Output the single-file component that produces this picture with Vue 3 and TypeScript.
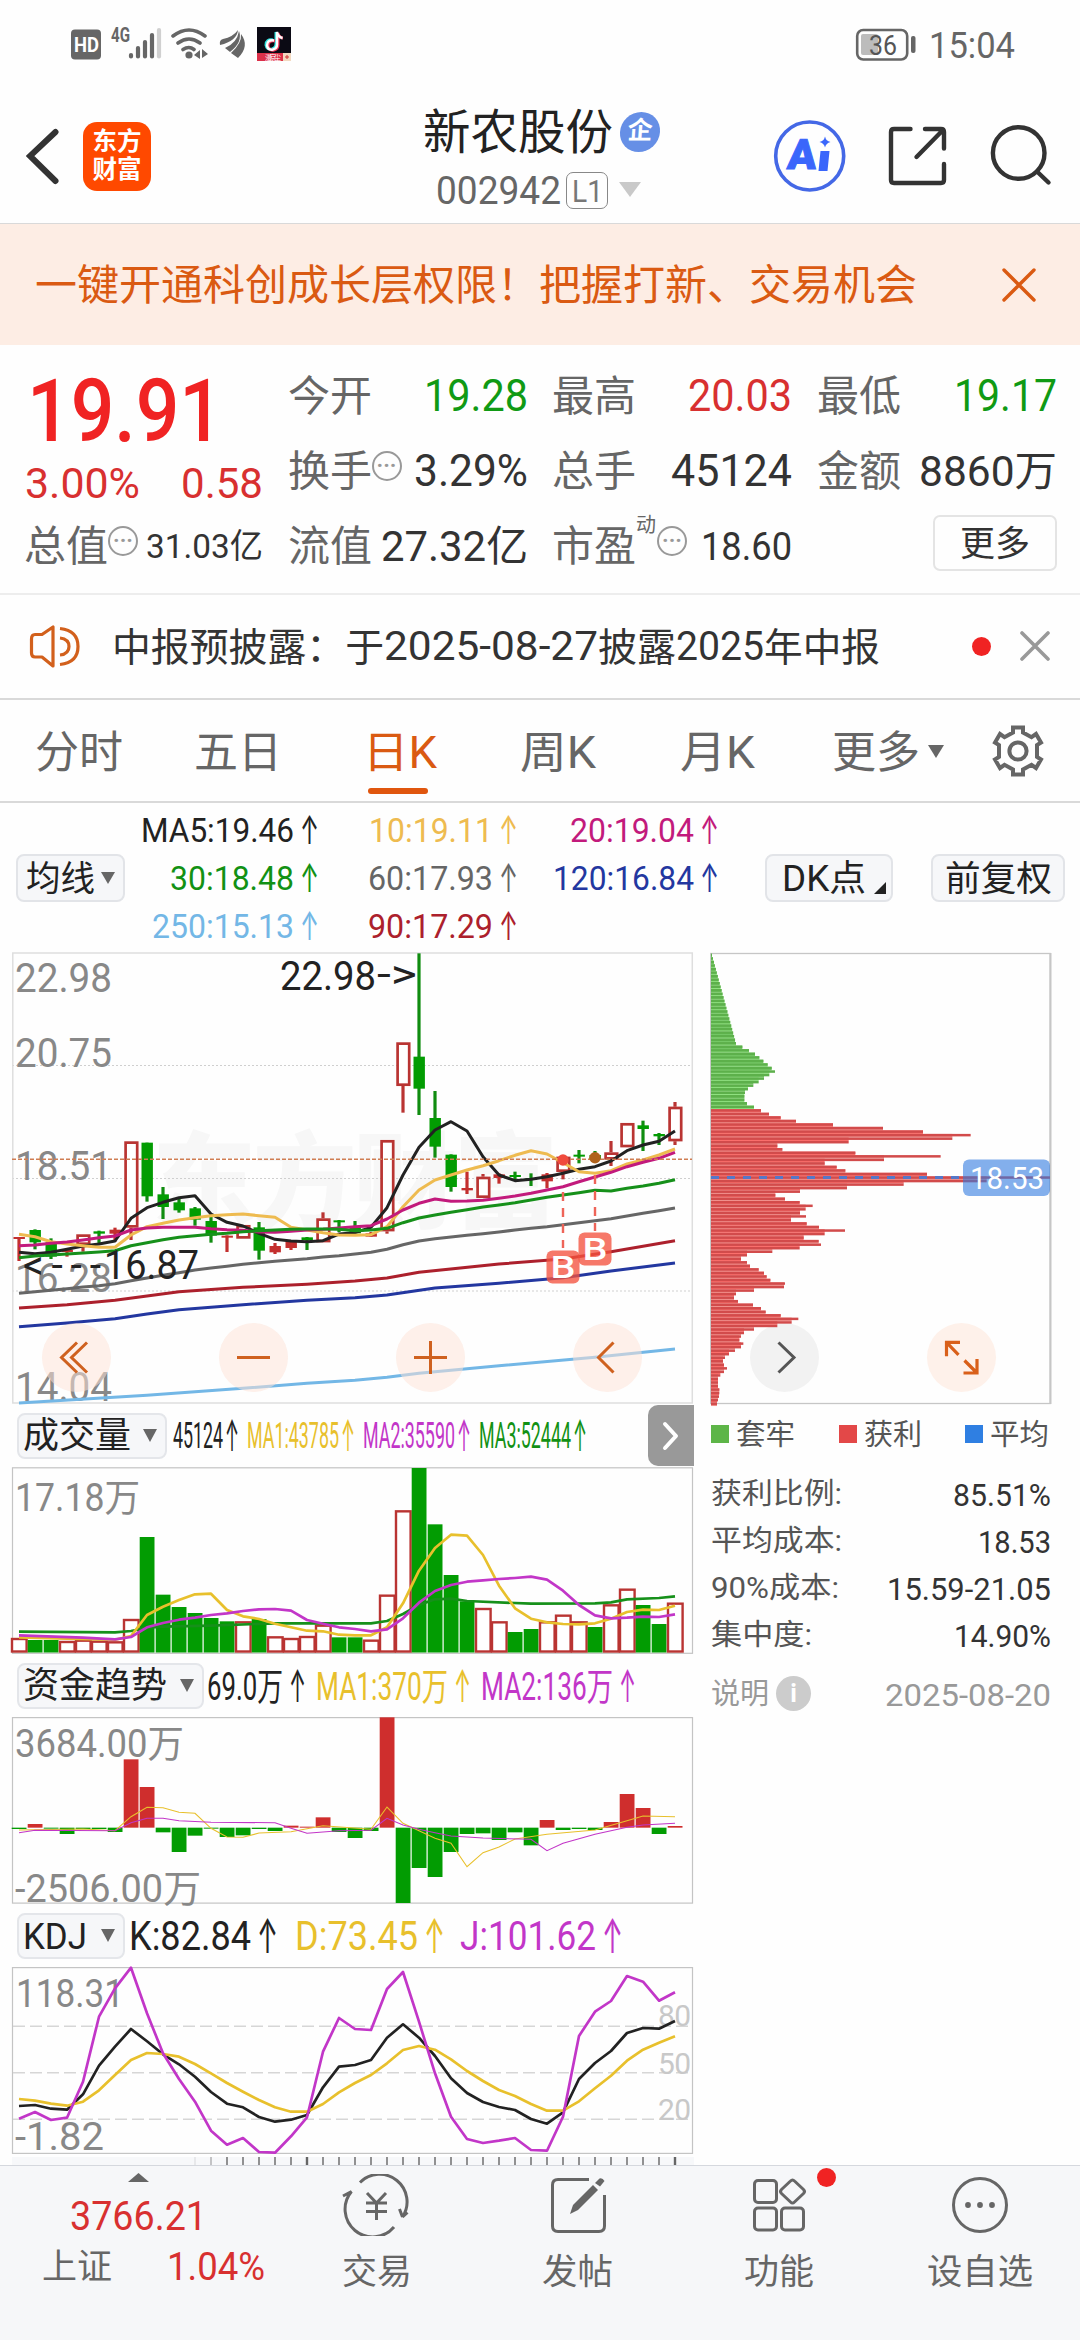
<script setup lang="ts">
import { defineComponent, h } from 'vue'

// One line of text squeezed or stretched to an exact advance width, centred vertically in its box.
// `aw` is the width of a trailing up arrow (0 for none), `ag` the gap before it.
const Fit = defineComponent({
  props: {
    t: { type: String, required: true },
    w: { type: Number, required: true },
    s: { type: Number, default: 42 },
    c: { type: String, default: '#333' },
    weight: { type: Number, default: 400 },
    aw: { type: Number, default: 0 },
    ag: { type: Number, default: 7 },
  },
  setup(p) {
    return () => {
      const box = Math.round(p.s * 1.2)
      const base = box / 2 + p.s * 0.36
      const kids = [
        h('text', {
          x: 0, y: base, 'font-size': p.s, fill: p.c, 'font-weight': p.weight,
          textLength: p.aw ? p.w - p.aw - p.ag : p.w, lengthAdjust: 'spacingAndGlyphs',
        }, p.t),
      ]
      if (p.aw) {
        kids.push(h('text', {
          x: p.w - p.aw - 1, y: base + p.s * 0.07, 'font-size': p.s * 1.2, fill: p.c, textLength: p.aw + 3,
          lengthAdjust: 'spacingAndGlyphs', 'font-family': 'Inter, sans-serif',
        }, '↑'))
      }
      return h('svg', { width: p.w, height: box, style: 'display:block;flex:none;overflow:visible' }, kids)
    }
  },
})

type Pt = [number, number]
const RED = '#b93432'
const GREEN = '#029c02'
const X = (i: number) => 19 + 16 * i
const line = (pts: Pt[], top: number) =>
  pts.map(([i, y]) => `${X(i)},${(top + y / 3).toFixed(1)}`).join(' ')
const all = (ys: number[]): Pt[] => ys.map((y, i) => [i, y] as Pt)

// kind, high, body top, body bottom, low
const rawCandles: [string, number, number, number, number][] = [
  ['r', 891, 891, 896, 963], ['g', 868, 870, 907, 928], ['g', 895, 907, 950, 957], ['r', 925, 929, 936, 950],
  ['h', 883, 883, 915, 935], ['g', 872, 874, 881, 910], ['r', 863, 869, 881, 905], ['h', 604, 604, 863, 900],
  ['g', 608, 608, 769, 785], ['g', 741, 763, 801, 837], ['g', 773, 787, 811, 818], ['g', 801, 805, 839, 857],
  ['g', 830, 843, 887, 908], ['r', 886, 887, 893, 936], ['h', 855, 855, 896, 896], ['g', 846, 862, 932, 959],
  ['r', 909, 918, 937, 942], ['r', 900, 905, 924, 930], ['g', 891, 892, 900, 930], ['h', 817, 835, 907, 907],
  ['g', 840, 841, 847, 876], ['g', 843, 862, 880, 880], ['r', 876, 880, 890, 890], ['h', 600, 600, 874, 881],
  ['h', 307, 307, 438, 518], ['g', 40, 350, 446, 525], ['g', 453, 534, 620, 653], ['g', 643, 644, 741, 755],
  ['r', 695, 744, 751, 762], ['h', 702, 710, 774, 774], ['r', 700, 703, 714, 731], ['g', 695, 705, 710, 722],
  ['g', 700, 714, 717, 738], ['r', 699, 703, 724, 745], ['h', 650, 650, 696, 718], ['g', 630, 644, 648, 670],
  ['g', 633, 645, 660, 668], ['h', 603, 637, 659, 678], ['h', 549, 549, 622, 622], ['g', 542, 556, 567, 633],
  ['g', 579, 582, 589, 615], ['h', 486, 500, 604, 615],
]
const candles = rawCandles.map(([k, hi, t, b, lo], i) => ({
  k, x: X(i), hi: 940 + hi / 3, t: 940 + t / 3, b: 940 + b / 3, lo: 940 + lo / 3,
}))

const priceLines = [
  { c: '#73b7e6', p: [[0, 1389], [8, 1366], [14, 1345], [18, 1330], [21, 1321], [23, 1312], [25, 1300], [30, 1277], [36, 1252], [41, 1227]] as Pt[] },
  { c: '#2337a0', p: [[0, 1160], [3, 1149], [6, 1136], [8, 1122], [10, 1109], [14, 1094], [18, 1081], [21, 1073], [23, 1065], [26, 1044], [30, 1030], [34, 1013], [37, 993], [41, 969]] as Pt[] },
  { c: '#ac202c', p: [[0, 1104], [3, 1094], [6, 1081], [8, 1068], [10, 1055], [14, 1042], [18, 1033], [21, 1023], [23, 1014], [25, 997], [30, 972], [34, 957], [37, 935], [41, 902]] as Pt[] },
  { c: '#666', p: all([1060, 1055, 1051, 1046, 1041, 1037, 1031, 1022, 1014, 1006, 998, 990, 984, 979, 973, 968, 964, 960, 956, 951, 947, 942, 937, 928, 914, 903, 896, 891, 886, 881, 876, 870, 865, 860, 854, 848, 842, 836, 828, 820, 812, 804]) },
  { c: '#222', p: all([937, 941, 937, 928, 918, 912, 903, 835, 803, 787, 773, 767, 822, 847, 858, 880, 898, 903, 905, 902, 882, 878, 862, 803, 705, 622, 570, 545, 573, 650, 705, 722, 718, 710, 700, 688, 680, 663, 632, 615, 604, 573]) },
  { c: '#eebb50', p: all([883, 890, 905, 912, 917, 922, 922, 885, 860, 850, 840, 833, 827, 824, 822, 827, 832, 862, 870, 878, 885, 886, 884, 860, 800, 750, 720, 705, 690, 677, 662, 646, 632, 642, 668, 695, 700, 692, 672, 660, 645, 627]) },
  { c: '#c21a7c', p: all([917, 915, 910, 906, 900, 893, 888, 870, 864, 862, 862, 862, 866, 869, 871, 876, 877, 874, 870, 868, 864, 860, 857, 837, 810, 790, 777, 784, 783, 781, 775, 768, 760, 750, 740, 725, 711, 697, 680, 667, 655, 637]) },
  { c: '#16901a', p: all([953, 948, 945, 942, 939, 936, 932, 917, 908, 899, 892, 887, 883, 880, 875, 872, 870, 868, 867, 867, 868, 872, 870, 865, 848, 834, 825, 817, 809, 801, 795, 788, 780, 772, 765, 758, 751, 753, 745, 738, 730, 719]) },
]
const priceLabels: [string, number][] = [['22.98', 992], ['20.75', 1067], ['18.51', 1180], ['16.28', 1292], ['14.04', 1401]]

const volRaw = 'r717 g720 g720 r726 r722 r725 r727 r660 g411 g584 g621 g639 g654 g664 r667 g657 r712 r717 r711 r677 g712 g712 r722 r587 r334 g204 g373 g525 g604 r627 r667 g696 g687 r667 r647 r667 g681 r616 r569 g615 g672 r611'
const vol = volRaw.split(' ').map((v, i) => ({ k: v[0], x: X(i), y: 1400 + Number(v.slice(1)) / 3 }))
const volLines = [
  { c: '#16901a', p: [[0, 695], [6, 697], [7, 693], [8, 683], [9, 680], [12, 677], [16, 670], [22, 670], [23, 663], [24, 642], [25, 615], [26, 598], [27, 596], [28, 603], [32, 611], [36, 610], [37, 607], [38, 598], [40, 594], [41, 589]] as Pt[] },
  { c: '#e8c02c', p: [[0, 712], [3, 716], [6, 719], [7, 708], [8, 645], [9, 620], [10, 600], [11, 583], [12, 581], [13, 630], [14, 649], [15, 657], [16, 671], [17, 682], [18, 692], [19, 694], [20, 704], [21, 706], [22, 706], [23, 682], [24, 610], [25, 512], [26, 444], [27, 404], [28, 407], [29, 465], [30, 557], [31, 625], [32, 656], [33, 667], [34, 672], [35, 673], [36, 670], [37, 656], [38, 636], [39, 629], [40, 630], [41, 617]] as Pt[] },
  { c: '#c236c8', p: [[0, 706], [4, 713], [6, 718], [7, 711], [8, 682], [9, 669], [10, 659], [11, 653], [12, 645], [13, 640], [14, 633], [15, 628], [16, 627], [17, 632], [18, 660], [19, 671], [20, 682], [21, 687], [22, 694], [23, 688], [24, 655], [25, 608], [26, 573], [27, 555], [28, 545], [29, 541], [30, 537], [31, 534], [32, 530], [33, 539], [34, 572], [35, 615], [36, 646], [37, 655], [38, 653], [39, 650], [40, 651], [41, 643]] as Pt[] },
]

const flowRaw = [1287, 1272, 1286, 1302, 1287, 1287, 1296, 1078, 1161, 1297, 1356, 1307, 1286, 1311, 1306, 1287, 1293, 1277, 1280, 1252, 1296, 1314, 1293, 952, 1509, 1404, 1431, 1356, 1302, 1300, 1320, 1297, 1336, 1260, 1290, 1287, 1290, 1266, 1182, 1224, 1302, 1278]
const flow = flowRaw.map((v, i) => ({
  x: X(i) - 7.3, y: 1400 + Math.min(v, 1283) / 3, h: Math.max(Math.abs(v - 1283) / 3, 1), c: v < 1283 ? '#cf2e2d' : '#029c02',
}))
const flowLines = [
  { c: '#e8c02c', p: [[0, 1290], [4, 1287], [6, 1292], [7, 1250], [8, 1222], [9, 1223], [10, 1237], [11, 1240], [12, 1285], [13, 1311], [14, 1312], [15, 1299], [17, 1295], [19, 1277], [22, 1288], [23, 1221], [24, 1270], [25, 1292], [26, 1315], [27, 1330], [28, 1400], [29, 1358], [30, 1341], [31, 1317], [33, 1303], [36, 1290], [38, 1262], [39, 1248], [41, 1250]] as Pt[] },
  { c: '#c236c8', p: [[0, 1298], [1, 1291], [6, 1292], [7, 1268], [8, 1255], [9, 1255], [10, 1262], [12, 1267], [16, 1268], [17, 1285], [18, 1300], [20, 1292], [22, 1291], [23, 1255], [24, 1275], [25, 1288], [26, 1298], [27, 1308], [29, 1314], [32, 1318], [33, 1352], [34, 1330], [36, 1303], [38, 1282], [39, 1275], [41, 1270]] as Pt[] },
]

const kdjLines = [
  { c: '#222', p: all([618, 615, 626, 629, 583, 497, 440, 387, 424, 463, 493, 530, 576, 611, 622, 651, 665, 659, 645, 562, 500, 495, 480, 413, 373, 413, 468, 535, 579, 606, 621, 630, 657, 671, 637, 537, 489, 453, 399, 384, 386, 363]) },
  { c: '#e8c02c', p: all([597, 602, 611, 617, 605, 571, 525, 480, 459, 462, 470, 492, 520, 549, 575, 600, 622, 635, 635, 612, 577, 549, 525, 490, 450, 438, 449, 478, 513, 543, 570, 588, 612, 632, 632, 604, 565, 527, 482, 449, 428, 409]) },
  { c: '#c236c8', p: all([656, 636, 660, 653, 545, 350, 265, 203, 340, 460, 537, 605, 692, 734, 714, 756, 758, 709, 652, 455, 354, 387, 390, 267, 216, 365, 520, 650, 717, 729, 722, 714, 750, 752, 650, 408, 335, 303, 228, 245, 302, 277]) },
]
const ticks = Array.from({ length: 31 }, (_, n) => {
  const i = n + 11
  return { x: X(i), w: i === 18 || i === 41 ? 2.4 : 1.4, o: i === 11 ? 0.15 : i === 12 ? 0.5 : 1 }
})

// Cost distribution: bar ends for each of the 128 price levels
const chipEnds: number[] = [
  ...Array.from({ length: 26 }, (_, k) => 36 + k * 2.88),
  127, 147, 165, 178, 190, 203, 215, 225, 208, 192, 176, 160, 144, 135, 133, 133, 141, 162,
  183, 207, 242, 288, 399, 549, 669, 812, 757, 446, 232, 247, 466, 722, 552, 374, 410, 436, 681, 1050, 860,
  611, 441, 300, 226, 255, 299, 338, 317, 300, 318, 273, 320, 357, 435, 374, 311, 356, 363, 299, 217, 141,
  123, 141, 150, 176, 192, 200, 211, 255, 252, 162, 108, 102, 114, 159, 183, 197, 242, 295, 275, 232, 162,
  132, 123, 118, 130, 123, 105, 87, 75, 69, 72, 81, 72, 61, 54, 54, 54, 58, 58, 57, 54, 51,
]
const chips = chipEnds.map((e, k) => ({
  y: 940 + (45 + 10.6 * k) / 3 - 1.3,
  w: (e - 33) / 3,
  g: (Math.min(e, chipEnds[k + 1] ?? e) - 33) / 3,
  c: k < 44 ? '#5db04b' : '#d24b4b',
  l: k < 44 ? (k % 2 ? '#8fe080' : '#74c765') : (k % 2 ? '#f0908c' : '#fb6f6c'),
}))

const maRows = [
  [{ t: 'MA5:19.46', w: 176, c: '#222' }, { t: '10:19.11', w: 147, c: '#eebb50' }, { t: '20:19.04', w: 147, c: '#c21a7c' }],
  [{ t: '30:18.48', w: 147, c: '#129114' }, { t: '60:17.93', w: 148, c: '#666' }, { t: '120:16.84', w: 164, c: '#2337a0' }],
  [{ t: '250:15.13', w: 165, c: '#73b7e6' }, { t: '90:17.29', w: 148, c: '#ac202c' }],
]
const stats = [
  { k: '获利比例:', kw: 131, v: '85.51%', vw: 98 },
  { k: '平均成本:', kw: 131, v: '18.53', vw: 73 },
  { k: '90%成本:', kw: 128, v: '15.59-21.05', vw: 164 },
  { k: '集中度:', kw: 101, v: '14.90%', vw: 97 },
]
</script>

<template>
  <div class="page">
    <header class="status">
      <svg width="230" height="44" viewBox="68 24 230 44">
        <rect x="71" y="30.5" width="30" height="30" rx="4" fill="#666" />
        <text x="74" y="53" font-size="20" font-weight="700" fill="#fff" textLength="25" lengthAdjust="spacingAndGlyphs">HD</text>
        <text x="111" y="43" font-size="20" font-weight="700" fill="#666" textLength="19" lengthAdjust="spacingAndGlyphs">4G</text>
        <g stroke-linecap="round" stroke-width="4.2" stroke="#666">
          <path d="M131 56v1.5M138 49v8.500M145 43v14.500M152 36v21.500" />
          <path d="M159 31v26.500" stroke="#d0d0d0" />
        </g>
        <g fill="none" stroke="#666" stroke-width="3.600" stroke-linecap="round">
          <path d="M173 37q16-12 32 0M178 44q11-8 22 0M183 50.500q6-4 11 0" />
        </g>
        <circle cx="189" cy="56" r="3.600" fill="#666" />
        <path d="M194 56l6-5v9zM208 55l-6-5v9z" fill="#666" />
        <path d="M220 46q-1-5 3-6q10-2 15-9q-1 11-18 15M225 49q12-5 14-17q4 11-9 21zM231 54q11-10 10-19q9 12-3 24z" fill="#666" />
        <rect x="257" y="28" width="34" height="34" fill="#0b0a14" />
        <rect x="257" y="54" width="26" height="8" fill="#dc3049" />
        <rect x="283" y="54" width="8" height="8" fill="#f3d9c0" />
        <path d="M285 58h4M287 56v4" stroke="#c33" />
        <text x="265" y="61" font-size="7" fill="#fff" textLength="16">漫京尘</text>
        <g fill="none" stroke-width="3">
          <path d="M273 41q-7-1-7 5q1 5 6 4q4-1 4-5V33q1 5 6 6" stroke="#2fe3e0" />
          <path d="M275 42q-7-1-7 5q1 5 6 4q4-1 4-5V34q1 5 5 5" stroke="#f03a5c" />
          <path d="M274 41.500q-7-1-7 5q1 5 6 4q4-1 4-5V33q1 5 5.500 6" stroke="#fff" stroke-width="2.500" />
        </g>
      </svg>
      <div class="status-right">
        <svg width="62" height="34" viewBox="855 28 62 34">
          <rect x="857.200" y="30" width="50" height="29.500" rx="6" fill="none" stroke="#666" stroke-width="2.600" />
          <rect x="861" y="34" width="17" height="21" rx="2" fill="#bcbcbc" />
          <text x="869" y="55" font-size="27" fill="#555" textLength="28" lengthAdjust="spacingAndGlyphs">36</text>
          <rect x="911" y="36" width="4.500" height="17" rx="2" fill="#666" />
        </svg>
        <Fit t="15:04" :w="86" :s="36" c="#666" />
      </div>
    </header>

    <nav class="nav">
      <div class="nav-left">
        <svg width="34" height="60" viewBox="26 126 34 60"><path d="M55.500 132L30 156l25.500 25" fill="none" stroke="#333" stroke-width="6" stroke-linecap="round" /></svg>
        <div class="logo"><span>东方</span><span>财富</span></div>
      </div>
      <div class="title">
        <div class="name">
          <Fit t="新农股份" :w="190" :s="48" c="#222" />
          <div class="ent">企</div>
        </div>
        <div class="code">
          <Fit t="002942" :w="125" :s="38" c="#666" />
          <div class="lv"><Fit t="L1" :w="31" :s="32" c="#777" /></div>
          <svg width="22" height="16" viewBox="0 0 22 16"><path d="M0 0h22L11 15z" fill="#c9c9c9" /></svg>
        </div>
      </div>
      <div class="nav-right">
        <svg width="74" height="74" viewBox="772 119 74 74">
          <circle cx="808.700" cy="156" r="34" fill="none" stroke="#4468e6" stroke-width="3.600" />
          <text x="0" y="0" transform="translate(785.500 168.500) skewX(-5)" font-size="42" font-weight="900" fill="#3a66fb" stroke="#3a66fb" stroke-width="1" textLength="29" lengthAdjust="spacingAndGlyphs">A</text>
          <path d="M819.500 151h9l-2 20h-9zM824 136.500q1 4.500 5.500 5.500q-4.500 1-5.500 5.500q-1-4.500-5.500-5.500q4.500-1 5.500-5.500z" fill="#3a66fb" />
        </svg>
        <svg width="62" height="62" viewBox="886 125 62 62">
          <path d="M909.500 129H893q-3 0-3 3v48q0 3 3 3h47q3 0 3-3v-16M924 129h16q3 0 3 3v16.500M941.500 130.500L915.500 157" fill="none" stroke="#333" stroke-width="4.400" stroke-linecap="round" />
        </svg>
        <svg width="64" height="64" viewBox="989 124 64 64">
          <circle cx="1018.700" cy="153" r="25.800" fill="none" stroke="#333" stroke-width="4.400" />
          <path d="M1037 171.500l11.500 11" stroke="#333" stroke-width="4.400" stroke-linecap="round" />
        </svg>
      </div>
    </nav>

    <section class="banner">
      <Fit t="一键开通科创成长层权限！把握打新、交易机会" :w="882" :s="42" c="#da5a12" />
      <svg width="34" height="34" viewBox="0 0 34 34"><path d="M2 2l30 30M32 2L2 32" stroke="#da5a12" stroke-width="3.400" stroke-linecap="round" /></svg>
    </section>

    <section class="quote">
      <div class="q-main">
        <div class="price"><Fit t="19.91" :w="196" :s="88" c="#f02323" :weight="500" /></div>
        <div class="chg"><Fit t="3.00%" :w="115" :s="43" c="#d83030" /><Fit t="0.58" :w="82" :s="43" c="#d83030" /></div>
      </div>
      <div class="cell"><Fit t="今开" :w="84" c="#666" /><Fit t="19.28" :w="104" :s="44" c="#109a14" /></div>
      <div class="cell"><Fit t="最高" :w="84" c="#666" /><Fit t="20.03" :w="104" :s="44" c="#d83030" /></div>
      <div class="cell"><Fit t="最低" :w="84" c="#666" /><Fit t="19.17" :w="103" :s="44" c="#109a14" /></div>
      <div class="cell"><div class="lab"><Fit t="换手" :w="84" c="#666" /><i class="dots">···</i></div><Fit t="3.29%" :w="114" :s="44" /></div>
      <div class="cell"><Fit t="总手" :w="84" c="#666" /><Fit t="45124" :w="121" :s="44" /></div>
      <div class="cell"><Fit t="金额" :w="84" c="#666" /><Fit t="8860万" :w="138" :s="42" /></div>
      <div class="cell first"><div class="lab"><Fit t="总值" :w="84" c="#666" /><i class="dots">···</i></div><Fit t="31.03亿" :w="117" :s="34" /></div>
      <div class="cell"><Fit t="流值" :w="84" c="#666" /><Fit t="27.32亿" :w="147" :s="42" /></div>
      <div class="cell"><div class="lab"><Fit t="市盈" :w="84" c="#666" /><span class="sup">动</span><i class="dots">···</i></div><Fit t="18.60" :w="91" :s="39" /></div>
      <div class="cell end"><div class="more"><Fit t="更多" :w="70" :s="35" /></div></div>
    </section>

    <section class="news">
      <svg width="52" height="44" viewBox="29 624 52 44" fill="none" stroke="#d2601c" stroke-width="3.200" stroke-linejoin="round">
        <path d="M53 627v39l-11-9h-7q-3.500 0-3.500-4v-14q0-4.500 3.500-4.500h7zM60 628.500q18 2 18 18t-18 18M60 638q9 1 9 8.500t-9 8.500" />
      </svg>
      <div class="ntext">
        <Fit t="中报预披露：于" :w="272" :s="39" />
        <Fit t="2025-08-27" :w="214" :s="40" />
        <Fit t="披露" :w="78" :s="39" />
        <Fit t="2025" :w="88" :s="40" />
        <Fit t="年中报" :w="116" :s="39" />
      </div>
      <i class="dot" />
      <svg width="30" height="30" viewBox="0 0 30 30"><path d="M2 2l26 26M28 2L2 28" stroke="#999" stroke-width="3.600" stroke-linecap="round" /></svg>
    </section>

    <section class="tabs">
      <Fit t="分时" :w="88" :s="44" c="#666" />
      <Fit class="t2" t="五日" :w="88" :s="44" c="#666" />
      <div class="active"><Fit t="日K" :w="74" :s="44" c="#da5a12" /></div>
      <Fit class="t4" t="周K" :w="76" :s="44" c="#666" />
      <Fit class="t5" t="月K" :w="75" :s="44" c="#666" />
      <Fit class="t6" t="更多" :w="88" :s="44" c="#666" />
      <svg class="t7" width="16" height="14" viewBox="0 0 16 14"><path d="M0 0h16L8 13z" fill="#666" /></svg>
      <svg class="t8" width="54" height="54" viewBox="-27 -27 54 54" fill="none" stroke="#666" stroke-width="4">
        <path d="M-5-23.500H5V-18.500L13.500-13.800L18-17L23-8.500L19-6V6L23 8.500L18 17L13.500 13.800L5 18.500V23.500H-5V18.500L-13.500 13.800L-18 17L-23 8.500L-19 6V-6L-23-8.500L-18-17L-13.500-13.800L-5-18.500Z" />
        <circle r="8.600" />
      </svg>
    </section>

    <section class="ma">
      <div class="chip c-ma"><Fit t="均线" :w="69" :s="35" c="#222" /><svg width="14" height="12" viewBox="0 0 14 12"><path d="M0 0h14L7 12z" fill="#666" /></svg></div>
      <div class="ma-grid">
        <template v-for="(row, r) in maRows" :key="r">
          <div v-for="m in row" :key="m.t" class="ma-cell"><Fit :t="m.t" :w="m.w" :s="33" :c="m.c" :aw="16" /></div>
        </template>
      </div>
      <div class="chip c-dk"><Fit t="DK点" :w="84" :s="36" c="#222" /><svg class="corner" width="12" height="12" viewBox="0 0 12 12"><path d="M12 0v12H0z" fill="#222" /></svg></div>
      <div class="chip c-fq"><Fit t="前复权" :w="107" :s="35" c="#222" /></div>
    </section>

    <section class="body">
      <div class="left">
        <svg class="chart" width="682" height="452" viewBox="12 952 682 452">
          <text x="152" y="1220" font-size="104" font-weight="900" fill="#f7f7f7" textLength="406">东方财富</text>
          <g stroke="#cfcfcf" stroke-width="1.200" stroke-dasharray="2 2">
            <path d="M12 1065.500H692M12 1178.500H692M12 1291H692" />
          </g>
          <rect x="12.800" y="953" width="679.500" height="450" fill="none" stroke="#dedede" stroke-width="1.500" />
          <text v-for="l in priceLabels" :key="l[0]" x="15" :y="l[1]" font-size="40" fill="#888" textLength="97" lengthAdjust="spacingAndGlyphs">{{ l[0] }}</text>
          <g v-for="c in candles" :key="c.x">
            <template v-if="c.k === 'h'">
              <path :d="`M${c.x} ${c.hi}V${c.t}M${c.x} ${c.b}V${c.lo}`" :stroke="RED" stroke-width="3.200" />
              <rect :x="c.x - 5.400" :y="c.t + 1.300" width="11.600" :height="Math.max(c.b - c.t - 2.600, 1)" fill="#fff" :stroke="RED" stroke-width="2.700" />
            </template>
            <template v-else>
              <path :d="`M${c.x} ${c.hi}V${c.lo}`" :stroke="c.k === 'r' ? '#c32f2e' : '#108c10'" stroke-width="3.200" />
              <rect :x="c.x - 5.500" :y="c.t" width="11.400" :height="Math.max(c.b - c.t, 2)" :fill="c.k === 'r' ? '#c32f2e' : GREEN" />
            </template>
          </g>
          <polyline v-for="l in priceLines" :key="l.c" :points="line(l.p, 940)" fill="none" :stroke="l.c" stroke-width="3" stroke-linejoin="round" />
          <path d="M12 1159.200H692" stroke="#cf7d52" stroke-width="1.500" stroke-dasharray="4 2" />
          <circle cx="563" cy="1160" r="5.700" fill="#f04a3c" />
          <circle cx="595" cy="1157.800" r="5.700" fill="#b0621c" />
          <path d="M563 1192v56M595 1175v56" stroke="#ee6458" stroke-width="2.400" stroke-dasharray="9 7" />
          <g fill="#f4523f" fill-opacity=".78"><rect x="546.500" y="1250.500" width="33" height="33" rx="6" /><rect x="578.500" y="1232.500" width="33" height="33" rx="6" /></g>
          <g fill="#fff" font-size="31" font-weight="500"><text x="550.500" y="1278" textLength="25" lengthAdjust="spacingAndGlyphs">B</text><text x="582.500" y="1260" textLength="25" lengthAdjust="spacingAndGlyphs">B</text></g>
          <g fill="#222" font-size="41">
            <text x="280" y="990" textLength="96" lengthAdjust="spacingAndGlyphs">22.98</text>
            <text x="377" y="988" textLength="40" lengthAdjust="spacingAndGlyphs">-&gt;</text>
            <text x="23" y="1279" textLength="78" lengthAdjust="spacing">&lt;---</text>
            <text x="104" y="1279" textLength="95" lengthAdjust="spacingAndGlyphs">16.87</text>
          </g>
          <g fill="#fde3d6" fill-opacity=".52">
            <circle cx="76.500" cy="1357.500" r="34.500" /><circle cx="253.500" cy="1357.500" r="34.500" /><circle cx="430.500" cy="1357.500" r="34.500" /><circle cx="607.500" cy="1357.500" r="34.500" />
          </g>
          <path d="M77 1342.500L61.500 1357.500l15.500 15M87 1342.500L71.500 1357.500l15.500 15M237 1357.500h33M414 1357.500h33M430.500 1341v33M613.500 1342.500L598.500 1357.500l15 15" fill="none" stroke="#cf611f" stroke-width="3" />
        </svg>

        <div class="head">
          <div class="sel s1"><Fit t="成交量" :w="108" :s="36" c="#222" /><b /></div>
          <Fit t="45124" :w="64" :s="36" c="#222" :aw="11" :ag="3" />
          <Fit class="g10" t="MA1:43785" :w="106" :s="36" c="#e8c02c" :aw="11" :ag="3" />
          <Fit class="g10" t="MA2:35590" :w="106" :s="36" c="#c236c8" :aw="11" :ag="3" />
          <Fit class="g10" t="MA3:52444" :w="106" :s="36" c="#129114" :aw="11" :ag="3" />
          <div class="next"><svg width="18" height="30" viewBox="0 0 18 30"><path d="M3 3l11 12L3 27" fill="none" stroke="#fff" stroke-width="4" stroke-linecap="round" stroke-linejoin="round" /></svg></div>
        </div>

        <svg class="chart" width="682" height="187" viewBox="12 1467 682 187">
          <rect x="12.500" y="1467.800" width="680" height="185.500" fill="none" stroke="#c4c4c4" stroke-width="1.200" />
          <text x="15" y="1511" font-size="38" fill="#888" textLength="125" lengthAdjust="spacingAndGlyphs">17.18万</text>
          <template v-for="v in vol" :key="v.x">
            <rect v-if="v.k === 'g'" :x="v.x - 7.300" :y="v.y" width="14.800" :height="1652.500 - v.y" fill="#029c02" />
            <rect v-else :x="v.x - 7" :y="v.y" width="14.600" :height="1651.500 - v.y" fill="#fff" :stroke="RED" stroke-width="2.400" />
          </template>
          <polyline v-for="l in volLines" :key="l.c" :points="line(l.p, 1400)" fill="none" :stroke="l.c" stroke-width="2.700" stroke-linejoin="round" />
        </svg>

        <div class="head">
          <div class="sel s2"><Fit t="资金趋势" :w="144" :s="36" c="#222" /><b /></div>
          <Fit t="69.0万" :w="97" :s="38" c="#222" :aw="14" />
          <Fit class="g12" t="MA1:370万" :w="153" :s="38" c="#e8c02c" :aw="14" />
          <Fit class="g12" t="MA2:136万" :w="153" :s="38" c="#c236c8" :aw="14" />
        </div>

        <svg class="chart" width="682" height="187" viewBox="12 1717 682 187">
          <rect x="12.500" y="1717.600" width="680" height="185.500" fill="none" stroke="#c4c4c4" stroke-width="1.200" />
          <g fill="#888" font-size="38">
            <text x="15" y="1757" textLength="169" lengthAdjust="spacingAndGlyphs">3684.00万</text>
            <text x="15" y="1902" textLength="186" lengthAdjust="spacingAndGlyphs">-2506.00万</text>
          </g>
          <rect v-for="f in flow" :key="f.x" :x="f.x" :y="f.y" width="14.800" :height="f.h" :fill="f.c" />
          <polyline v-for="l in flowLines" :key="l.c" :points="line(l.p, 1400)" fill="none" :stroke="l.c" stroke-width="1.100" />
        </svg>

        <div class="head">
          <div class="sel s3"><Fit t="KDJ" :w="64" :s="37" c="#222" /><b /></div>
          <Fit t="K:82.84" :w="147" :s="40" c="#222" :aw="18" />
          <Fit class="g19" t="D:73.45" :w="148" :s="40" c="#e8c02c" :aw="18" />
          <Fit class="g17" t="J:101.62" :w="161" :s="40" c="#c236c8" :aw="18" />
        </div>

        <svg class="chart" width="682" height="187" viewBox="12 1967 682 187">
          <rect x="12.500" y="1967.600" width="680" height="185.800" fill="none" stroke="#c4c4c4" stroke-width="1.200" />
          <path d="M13 2026.300H692M13 2072.700H692M13 2119.300H692" stroke="#d6d6d6" stroke-width="1.400" stroke-dasharray="12 5" />
          <g fill="#888" font-size="38">
            <text x="16" y="2007" textLength="108" lengthAdjust="spacingAndGlyphs">118.31</text>
            <text x="15" y="2150" textLength="89" lengthAdjust="spacingAndGlyphs">-1.82</text>
          </g>
          <g fill="#c8c8c8" font-size="30">
            <text x="658" y="2026" textLength="33">80</text><text x="658" y="2073.500" textLength="33">50</text><text x="658" y="2119.500" textLength="33">20</text>
          </g>
          <polyline v-for="l in kdjLines" :key="l.c" :points="line(l.p, 1900)" fill="none" :stroke="l.c" stroke-width="2.700" stroke-linejoin="round" />
        </svg>
        <svg class="chart" width="682" height="11" viewBox="12 2154 682 11">
          <rect x="12" y="2157" width="682" height="8" fill="#f7f8fa" />
          <rect v-for="t in ticks" :key="t.x" :x="t.x - t.w / 2" y="2157" :width="t.w" height="8" fill="#666" :opacity="t.o" />
        </svg>
      </div>

      <div class="right">
        <svg class="chart" width="342" height="452" viewBox="710 952 342 452">
          <rect x="710.700" y="953.500" width="339.500" height="450" fill="none" stroke="#c6c6c6" stroke-width="1.300" />
          <path d="M1050.500 953v451" stroke="#c6c6c6" stroke-width="2" />
          <circle cx="784.500" cy="1357.500" r="34.500" fill="#f2f2f2" />
          <circle cx="961.500" cy="1357.500" r="34.500" fill="#fef1ea" />
          <template v-for="b in chips" :key="b.y">
            <rect x="711" :y="b.y" :width="b.g" height="3.600" :fill="b.l" />
            <rect x="711" :y="b.y" :width="b.w" height="2.500" :fill="b.c" />
          </template>
          <path d="M711 1177.600H962" stroke="#5577c8" stroke-width="3" stroke-dasharray="8 8" />
          <rect x="963" y="1159.500" width="87" height="36.500" rx="6" fill="#3079df" fill-opacity=".6" />
          <text x="970" y="1189" font-size="32" fill="#fff" textLength="74" lengthAdjust="spacingAndGlyphs">18.53</text>
          <path d="M778.500 1342.500l15.500 15-15.500 15" fill="none" stroke="#555" stroke-width="3" />
          <path d="M960 1342.300h-13.500v14M946.500 1342.300l12 12.500M963.500 1373h13.500v-14M977 1373l-12.500-12.500" fill="none" stroke="#d9601a" stroke-width="3.200" />
        </svg>
        <div class="legend">
          <span><i class="lg" /><Fit t="套牢" :w="59" :s="29" c="#555" /></span>
          <span><i class="lr" /><Fit t="获利" :w="58" :s="29" c="#555" /></span>
          <span><i class="lb" /><Fit t="平均" :w="59" :s="29" c="#555" /></span>
        </div>
        <div v-for="s in stats" :key="s.k" class="stat"><Fit :t="s.k" :w="s.kw" :s="29" c="#555" /><Fit :t="s.v" :w="s.vw" :s="32" /></div>
        <div class="stat note"><div class="lab"><Fit t="说明" :w="58" :s="29" c="#999" /><i class="info">i</i></div><Fit t="2025-08-20" :w="166" :s="32" c="#999" /></div>
      </div>
    </section>

    <footer class="foot">
      <div class="index">
        <svg width="21" height="9" viewBox="0 0 21 9"><path d="M0 9L10.500 0L21 9z" fill="#666" /></svg>
        <Fit t="3766.21" :w="137" :s="40" c="#d83030" />
        <div class="idx"><Fit t="上证" :w="70" :s="35" c="#666" /><Fit t="1.04%" :w="98" :s="38" c="#d83030" /></div>
      </div>
      <div class="f">
        <svg width="70" height="62" viewBox="342 2173 70 62" fill="none" stroke="#666" stroke-width="3">
          <path d="M360 2181.500A27.500 27.500 0 0 1 402.500 2216l5-4.500M402.500 2216l-3-8M394 2226A27.500 27.500 0 0 1 351.500 2190.500l-8.500 4.500" />
          <path d="M367 2192l9.500 10 9.500-10M376.500 2202v17M366 2202h21M366 2210.500h21" />
        </svg>
        <Fit t="交易" :w="70" :s="35" c="#666" />
      </div>
      <div class="f">
        <svg width="58" height="62" viewBox="548 2173 58 62" fill="none" stroke="#666" stroke-width="3">
          <path d="M588 2178.500H557q-5.500 0-5.500 5.500v41q0 5.500 5.500 5.500h41q5.500 0 5.500-5.500v-31" />
          <path d="M569 2213l3-9 20-20 5 5-20 20z" fill="#666" stroke="none" /><path d="M594 2182l4.500-4.500q3-1 5 2.500l-4.500 5.500z" fill="#666" stroke="none" />
        </svg>
        <Fit t="发帖" :w="71" :s="35" c="#666" />
      </div>
      <div class="f badge">
        <svg width="58" height="62" viewBox="749 2173 58 62" fill="none" stroke="#666" stroke-width="3">
          <rect x="753.500" y="2179.500" width="22" height="22" rx="3.500" /><rect x="753.500" y="2207" width="22" height="22" rx="3.500" /><rect x="780.500" y="2207" width="22" height="22" rx="3.500" />
          <path d="M789.500 2180q2-2 4 0l9 8.500q2 2 0 4l-9 8.500q-2 2-4 0l-9-8.500q-2-2 0-4z" />
        </svg>
        <Fit t="功能" :w="70" :s="35" c="#666" />
      </div>
      <div class="f">
        <svg width="62" height="62" viewBox="948 2173 62 62"><circle cx="979" cy="2204" r="26.500" fill="none" stroke="#666" stroke-width="3" /><g fill="#666"><circle cx="967" cy="2204" r="2.900" /><circle cx="979" cy="2204" r="2.900" /><circle cx="991" cy="2204" r="2.900" /></g></svg>
        <Fit t="设自选" :w="106" :s="35" c="#666" />
      </div>
    </footer>
  </div>
</template>

<style>
html, body { margin: 0; background: #fff; }
</style>

<style scoped>
.page { width: 1080px; height: 2340px; overflow: hidden; background: #fefefe; font-family: Roboto, "Noto Sans CJK SC", sans-serif; color: #333; box-sizing: border-box; display: flex; flex-direction: column; }
.page * { box-sizing: border-box; }
svg { display: block; flex: none; }
.chart { overflow: visible; }
i { font-style: normal; }
.status { height: 90px; padding: 0 65px 0 68px; display: flex; justify-content: space-between; align-items: center; flex: none; }
.status-right { display: flex; align-items: center; gap: 12px; }
.nav { height: 135px; border-bottom: 2px solid #d9d9d9; margin-bottom: -1px; display: flex; justify-content: space-between; flex: none; }
.nav-left { width: 300px; display: flex; align-items: center; padding-left: 26px; gap: 23px; height: 132px; }
.logo { width: 68px; height: 69px; border-radius: 14px; background: #ff4900; color: #fff; font-size: 24.500px; line-height: 28px; font-weight: 700; display: flex; flex-direction: column; align-items: center; justify-content: center; }
.title { width: 240px; padding-top: 14px; margin-left: 13px; }
.name { display: flex; align-items: center; height: 56px; gap: 7px; }
.ent { width: 40px; height: 40px; border-radius: 50%; background: #668fe6; color: #fff; font-weight: 700; font-size: 25px; line-height: 38px; text-align: center; transform: skewX(-4deg); }
.code { display: flex; align-items: center; height: 60px; padding-left: 13px; }
.lv { width: 42px; height: 37px; border: 1.500px solid #888; border-radius: 7px; margin: 0 11px 0 5px; display: flex; align-items: center; justify-content: center; }
.nav-right { display: flex; align-items: center; height: 132px; gap: 40px; padding-right: 27px; }
.banner { height: 121px; background: #fdede4; flex: none; padding: 0 44px 0 35px; display: flex; justify-content: space-between; align-items: center; }
.quote { height: 250px; flex: none; padding: 13px 25px 12px 25px; border-bottom: 2px solid #ededed; display: grid; grid-template-columns: repeat(4, 238px); grid-template-rows: repeat(3, 75px); column-gap: 26.500px; }
.q-main { grid-row: 1 / span 2; height: 150px; }
.price { height: 102px; display: flex; align-items: center; padding-left: 2px; }
.chg { height: 46px; display: flex; justify-content: space-between; align-items: center; }
.cell { display: flex; align-items: center; justify-content: space-between; margin-left: -2px; }
.cell.first { margin-left: -1px; }
.cell.end { justify-content: flex-end; }
.lab { display: flex; align-items: center; }
.dots { width: 30px; height: 30px; border: 2px solid #999; border-radius: 50%; margin: -9px 0 0 0; font-size: 22px; font-weight: 700; color: #999; line-height: 25px; text-align: center; }
.sup { font-size: 20px; color: #666; margin: -44px 0 0 0; width: 21px; white-space: nowrap; }
.more { width: 124px; height: 56px; border: 2px solid #e4e4e4; border-radius: 7px; display: flex; align-items: center; justify-content: center; margin-top: -5px; }
.news { height: 105px; flex: none; display: flex; align-items: center; border-bottom: 2px solid #d9d9d9; padding-left: 29px; padding-bottom: 1px; }
.ntext { margin-left: 31px; display: flex; align-items: center; }
.dot { width: 19px; height: 19px; border-radius: 50%; background: #f02323; margin: 0 29px 0 92px; }
.tabs { height: 103px; flex: none; display: flex; align-items: center; border-bottom: 2px solid #d9d9d9; padding: 3px 0 0 35px; }
.t2 { margin-left: 71px; }
.active { margin-left: 81px; height: 98px; display: flex; align-items: center; position: relative; }
.active::after { content: ""; position: absolute; left: 5px; bottom: 7px; width: 60px; height: 6px; border-radius: 3px; background: #e0560e; }
.t4 { margin-left: 83px; }
.t5 { margin-left: 84px; }
.t6 { margin-left: 77px; }
.t7 { margin-left: 8px; }
.t8 { margin: -3px 0 0 47px; }
.ma { height: 149px; flex: none; display: flex; align-items: center; padding-left: 16px; padding-top: 1px; }
.chip { height: 48px; border: 2px solid #e2e4e8; border-radius: 8px; background: #f6f7f9; display: flex; align-items: center; justify-content: center; position: relative; flex: none; }
.c-ma { width: 109px; gap: 6px; }
.c-dk { width: 128px; margin-left: 48px; padding-right: 10px; }
.corner { position: absolute; right: 5px; bottom: 6px; }
.c-fq { width: 134px; margin-left: 38px; }
.ma-grid { display: grid; width: 592px; grid-template-columns: 192px 199px 201px; grid-template-rows: repeat(3, 48px); align-content: center; }
.ma-cell { display: flex; justify-content: flex-end; align-items: center; }
.body { height: 1213px; flex: none; display: flex; padding-left: 12px; gap: 16px; }
.left { width: 682px; flex: none; }
.head { height: 63px; display: flex; align-items: center; padding-left: 5px; position: relative; }
.sel { height: 46px; border: 2px solid #e4e6ea; border-radius: 8px; background: #f6f7f9; display: flex; align-items: center; justify-content: space-between; padding: 0 8px 0 4px; flex: none; }
.sel b { border: 7px solid transparent; border-top: 13px solid #666; border-bottom: 0; }
.s1 { width: 150px; margin-right: 6px; }
.s2 { width: 187px; margin-right: 3px; }
.s3 { width: 108px; margin-right: 4px; }
.g10 { margin-left: 10px; }
.g12 { margin-left: 12px; }
.g19 { margin-left: 19px; }
.g17 { margin-left: 17px; }
.next { position: absolute; right: 0; top: 1px; width: 46px; height: 61px; background: #999; border-radius: 10px 0 0 10px; display: flex; align-items: center; justify-content: center; }
.right { width: 342px; flex: none; }
.legend { height: 60px; display: flex; justify-content: space-between; align-items: center; padding: 0 3px 0 1px; margin-bottom: 6px; }
.legend span { display: flex; align-items: center; gap: 7px; }
.legend i { width: 18px; height: 18px; }
.lg { background: #5db548; }
.lr { background: #e34848; }
.lb { background: #2f7fe2; }
.stat { height: 47px; display: flex; align-items: center; justify-content: space-between; padding: 0 1px; }
.note { margin-top: 12px; }
.info { width: 35px; height: 35px; border-radius: 50%; background: #ccc; color: #fff; font-weight: 700; font-size: 25px; line-height: 35px; text-align: center; margin-left: 7px; }
.foot { flex: none; height: 175px; background: #f6f7f9; border-top: 1.500px solid #d5d8de; display: flex; }
.index { width: 276px; display: flex; flex-direction: column; align-items: center; padding-top: 7px; flex: none; }
.index > svg:nth-child(2) { margin-top: 10px; }
.idx { display: flex; align-items: center; justify-content: space-between; width: 223px; margin: 3px 0 0 31px; }
.f { width: 201px; display: flex; flex-direction: column; align-items: center; padding-top: 8px; gap: 14px; position: relative; flex: none; }
.badge::after { content: ""; position: absolute; left: 139px; top: 2px; width: 19px; height: 19px; border-radius: 50%; background: #f02323; }
</style>
